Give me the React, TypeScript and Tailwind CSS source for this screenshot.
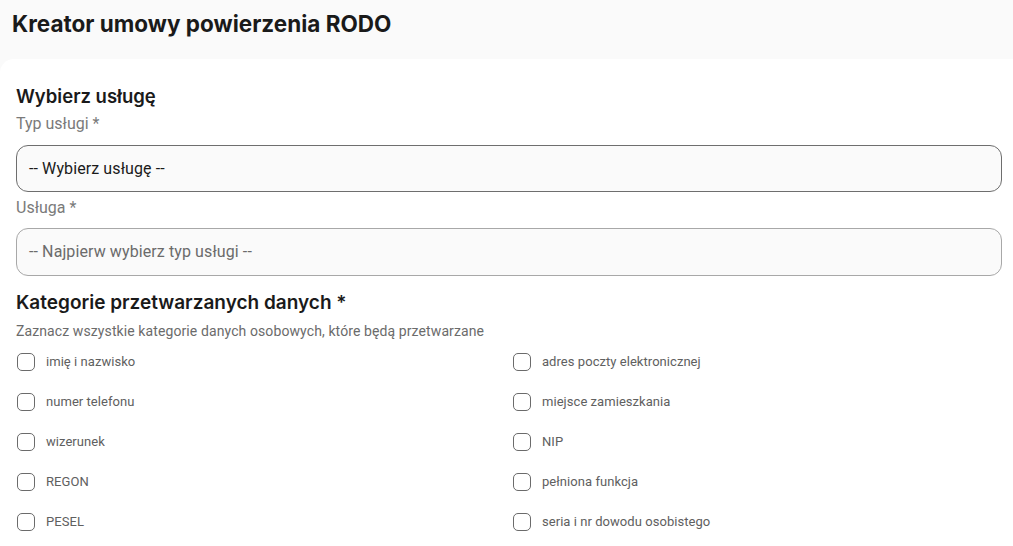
const left = ["imię i nazwisko", "numer telefonu", "wizerunek", "REGON", "PESEL"];
const right = [
  "adres poczty elektronicznej",
  "miejsce zamieszkania",
  "NIP",
  "pełniona funkcja",
  "seria i nr dowodu osobistego",
];

const Check = ({ label }: { label: string }) => (
  <label className="flex items-center h-[40px] gap-[11px] pl-[1px]">
    <span className="w-[18px] h-[18px] rounded-[5px] border border-[#6b6b6b] bg-white shrink-0" />
    <span className="text-[13px] tracking-[0.05px] text-[#606060]">{label}</span>
  </label>
);

const App = () => {
  const rows = left.flatMap((l, i) => [l, right[i]]);
  return (
    <div
      className="min-h-screen bg-[#fafafa] text-[#1a1a1a]"
      style={{ fontFamily: "Roboto, 'Liberation Sans', sans-serif" }}
    >
      <header className="h-[59px] px-3 pt-[9px]">
        <h1 className="text-[22.5px] leading-[30px] font-bold font-['Inter',sans-serif]">
          Kreator umowy powierzenia RODO
        </h1>
      </header>
      <main className="bg-white rounded-tl-[14px] pl-4 pr-[11px] pt-[24px] pb-4">
        <h2 className="text-[18.5px] leading-[26px] font-semibold font-['Inter',sans-serif]">
          Wybierz usługę
        </h2>
        <div className="text-[16px] leading-[20px] text-[#7a7a7a] mt-[5px]">Typ usługi *</div>
        <div className="mt-[11px] h-[47px] rounded-[12px] border border-[#6e6e6e] bg-[#fafafa] flex items-center px-3 text-[16px] tracking-[0.1px] text-[#1a1a1a]">
          -- Wybierz usługę --
        </div>
        <div className="text-[16px] leading-[20px] text-[#7a7a7a] mt-[6px]">Usługa *</div>
        <div className="mt-[10px] h-[48px] rounded-[12px] border border-[#a8a8a8] bg-[#fafafa] flex items-center px-3 text-[16px] tracking-[0.1px] text-[#6b6b6b]">
          -- Najpierw wybierz typ usługi --
        </div>
        <h2 className="mt-[14px] text-[19px] leading-[26px] font-semibold font-['Inter',sans-serif]">
          Kategorie przetwarzanych danych *
        </h2>
        <p className="mt-[6px] text-[14px] leading-[18px] tracking-[0.1px] text-[#6b6b6b]">
          Zaznacz wszystkie kategorie danych osobowych, które będą przetwarzane
        </p>
        <div className="grid grid-cols-2 gap-x-[6px] mt-[2px]">
          {rows.map((r) => (
            <Check key={r} label={r} />
          ))}
        </div>
      </main>
    </div>
  );
};

export default App;
